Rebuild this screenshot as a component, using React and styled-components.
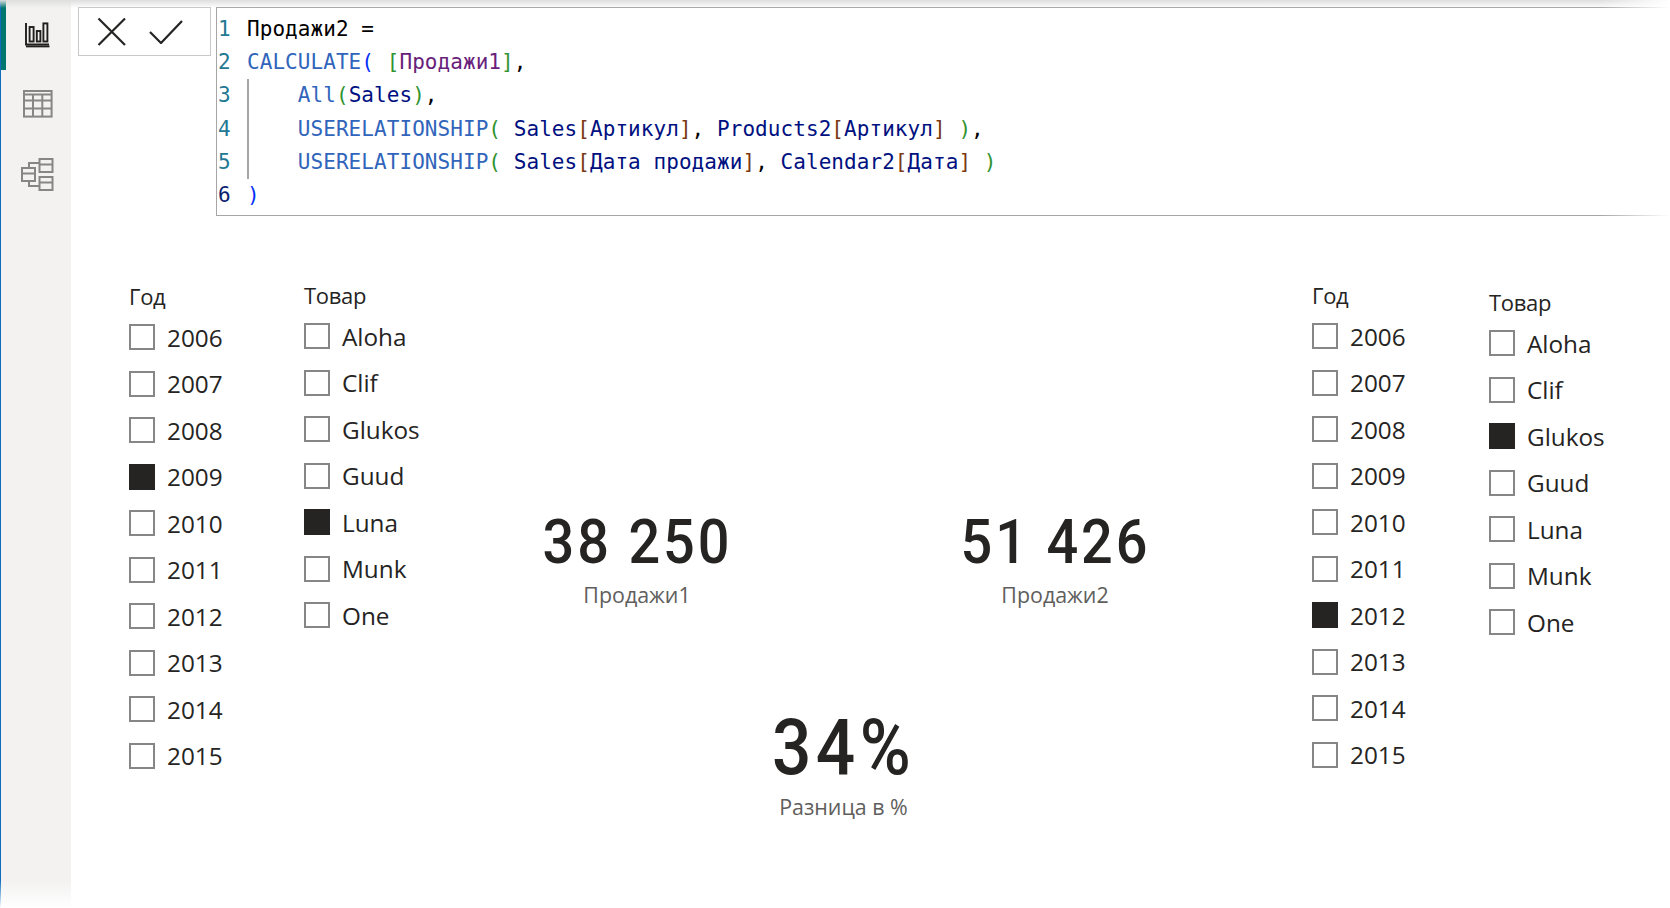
import React from 'react';
import styled, { createGlobalStyle } from 'styled-components';

const GlobalStyle = createGlobalStyle`
  html, body {
    margin: 0;
    padding: 0;
    background: #ffffff;
    overflow: hidden;
  }
`;

const Page = styled.div`
  width: 1670px;
  height: 908px;
  display: flex;
  position: relative;
  overflow: hidden;
  font-family: "Open Sans", "Noto Sans", sans-serif;
  color: #252423;
`;

// тень сверху и затухания по краям
const TopShade = styled.div`
  position: absolute;
  left: 0;
  right: 0;
  top: 0;
  height: 8px;
  background: linear-gradient(to bottom, #dedede, rgba(255, 255, 255, 0));
`;

const BottomFade = styled.div`
  position: absolute;
  left: 0;
  width: 71px;
  bottom: 0;
  height: 28px;
  background: linear-gradient(to bottom, rgba(255, 255, 255, 0), #ffffff);
`;

const RightFade = styled.div`
  position: absolute;
  right: 0;
  top: 0;
  width: 70px;
  height: 220px;
  background: linear-gradient(to right, rgba(255, 255, 255, 0), #ffffff);
`;

const Sidebar = styled.nav`
  width: 70px;
  height: 908px;
  flex: none;
  background: #f3f2f1;
  border-left: 1px solid #0f6cbd;
  display: flex;
  flex-direction: column;
`;

const SideItem = styled.div`
  height: 70px;
  box-sizing: border-box;
  display: flex;
  align-items: center;
  justify-content: center;
  border-left: 5px solid ${props => (props.$active ? '#00786f' : 'transparent')};
  padding-right: 1px;
  padding-bottom: ${props => props.$pb || 0}px;
`;

const Main = styled.main`
  flex: 1;
  min-width: 0;
  display: flex;
  flex-direction: column;
`;

const FormulaBar = styled.div`
  display: flex;
  align-items: flex-start;
  gap: 5px;
  padding: 7px 0 0 7px;
`;

const ActionBox = styled.div`
  width: 131px;
  height: 47px;
  flex: none;
  border: 1px solid #c8c8c8;
  display: flex;
  align-items: center;
`;

const Editor = styled.div`
  flex: 1;
  height: 209px;
  box-sizing: border-box;
  border-left: 1px solid #a6a6a6;
  border-top: 1px solid #a6a6a6;
  border-bottom: 1px solid #a6a6a6;
  padding-top: 5px;
  font-family: "DejaVu Sans Mono", "Liberation Mono", monospace;
  font-size: 21px;
  letter-spacing: 0.06px;
  position: relative;
`;

const Guide = styled.div`
  position: absolute;
  left: 30px;
  top: 71px;
  width: 2px;
  height: 100px;
  background: #a6a6a6;
`;

const CodeRow = styled.div`
  height: 33.2px;
  line-height: 33.2px;
  display: flex;
  white-space: pre;
`;

const LineNo = styled.span`
  width: 30px;
  padding-left: 1px;
  box-sizing: border-box;
  color: ${props => (props.$active ? '#0b216f' : '#237893')};
`;

const Tok = styled.span`
  color: ${props => props.$c};
`;

const Canvas = styled.div`
  flex: 1;
  display: flex;
  align-items: flex-start;
  padding-left: 58px;
`;

const Slicer = styled.div`
  width: ${props => props.$w}px;
  flex: none;
  margin-top: ${props => props.$top}px;
`;

const SlicerTitle = styled.div`
  font-size: 22px;
  line-height: 30px;
  height: 33px;
  letter-spacing: -0.3px;
`;

const SlicerRow = styled.div`
  height: 46.5px;
  display: flex;
  align-items: center;
  gap: 12px;
  font-size: 24.3px;
`;

const Box = styled.span`
  width: 26px;
  height: 26px;
  flex: none;
  box-sizing: border-box;
  border: 2px solid #868686;
  background: #ffffff;
  ${props => props.$on && 'background: #252423; border-color: #252423;'}
`;

const Center = styled.div`
  width: 841px;
  flex: none;
  margin-top: 288px;
`;

const KpiRow = styled.div`
  display: flex;
  justify-content: space-between;
  padding: 0 157px 0 66px;
`;

const Kpi = styled.div`
  width: 200px;
  display: flex;
  flex-direction: column;
  align-items: center;
`;

const KpiValue = styled.div`
  font-family: "Roboto", sans-serif;
  font-weight: 500;
  font-size: ${props => props.$size}px;
  line-height: ${props => props.$lh}px;
  letter-spacing: ${props => props.$ls}px;
  transform: scaleX(${props => props.$sx});
  white-space: nowrap;
`;

const KpiLabel = styled.div`
  font-size: 21.4px;
  line-height: 30px;
  color: #605e5c;
  white-space: nowrap;
  padding-top: ${props => props.$pt || 0}px;
`;

const BottomKpi = styled.div`
  display: flex;
  justify-content: center;
  margin-top: 94px;
  padding-right: 96px;
`;

const ActionSlot = styled.span`
  display: flex;
  margin-left: ${props => props.$left}px;
`;

const ReportIcon = () => (
  <svg width="26" height="26" viewBox="0 0 26 26" fill="none" stroke="#1f1e1d" strokeWidth="1.9">
    <path d="M1 1v21.5h23" />
    <path d="M1 24.4h23.5" />
    <rect x="4.6" y="5" width="4" height="14.5" />
    <rect x="11.8" y="9" width="3.6" height="10.5" />
    <rect x="18.4" y="1.4" width="4" height="18.1" />
  </svg>
);

const TableIcon = () => (
  <svg width="30" height="28" viewBox="0 0 30 28" fill="none" stroke="#868686" strokeWidth="2">
    <rect x="1" y="1" width="27.6" height="25.6" />
    <path d="M1 4.6h27.6M1 10.5h27.6M1 18.5h27.6M10 4.6v22M19.3 4.6v22" />
  </svg>
);

const ModelIcon = () => (
  <svg width="34" height="34" viewBox="0 0 34 34" fill="none" stroke="#868686" strokeWidth="2">
    <rect x="18.5" y="1" width="13" height="13" />
    <path d="M18.5 6.5h13" />
    <rect x="1" y="10" width="13" height="13" />
    <path d="M1 15.5h13" />
    <rect x="18.5" y="19" width="13" height="13" />
    <path d="M18.5 24.5h13" />
    <path d="M8 10V5h10.5M8 23v5h10.5" />
  </svg>
);

const CloseIcon = () => (
  <svg width="30" height="30" viewBox="0 0 30 30" fill="none" stroke="#252423" strokeWidth="2.2">
    <path d="M1.5 1.5l26.5 26.5M28 1.5L1.5 28" />
  </svg>
);

const CheckIcon = () => (
  <svg width="34" height="24" viewBox="0 0 34 24" fill="none" stroke="#252423" strokeWidth="2.2">
    <path d="M1 12l11 11L33 1" />
  </svg>
);

const FN = '#3165bb';
const MEASURE = '#68217a';
const TABLE = '#001080';
const P1 = '#0431fa';
const P2 = '#319331';
const P3 = '#7b3814';
const BLACK = '#000000';

const code = [
  [['Продажи2 =', BLACK]],
  [['CALCULATE', FN], ['(', P1], [' '], ['[', P2], ['Продажи1', MEASURE], [']', P2], [',', BLACK]],
  [['    '], ['All', FN], ['(', P2], ['Sales', TABLE], [')', P2], [',', BLACK]],
  [['    '], ['USERELATIONSHIP', FN], ['(', P2], [' '], ['Sales', TABLE], ['[', P3], ['Артикул', TABLE], [']', P3], [', ', BLACK], ['Products2', TABLE], ['[', P3], ['Артикул', TABLE], [']', P3], [' '], [')', P2], [',', BLACK]],
  [['    '], ['USERELATIONSHIP', FN], ['(', P2], [' '], ['Sales', TABLE], ['[', P3], ['Дата продажи', TABLE], [']', P3], [', ', BLACK], ['Calendar2', TABLE], ['[', P3], ['Дата', TABLE], [']', P3], [' '], [')', P2]],
  [[')', P1]],
];

const years = ['2006', '2007', '2008', '2009', '2010', '2011', '2012', '2013', '2014', '2015'];
const products = ['Aloha', 'Clif', 'Glukos', 'Guud', 'Luna', 'Munk', 'One'];

const SlicerList = ({ title, items, selected, width, top }) => (
  <Slicer $w={width} $top={top}>
    <SlicerTitle>{title}</SlicerTitle>
    {items.map(item => (
      <SlicerRow key={item}>
        <Box $on={item === selected} />
        <span>{item}</span>
      </SlicerRow>
    ))}
  </Slicer>
);

const App = () => (
  <Page>
    <GlobalStyle />
    <Sidebar>
      <SideItem $active><ReportIcon /></SideItem>
      <SideItem $pb={3}><TableIcon /></SideItem>
      <SideItem><ModelIcon /></SideItem>
    </Sidebar>
    <Main>
      <FormulaBar>
        <ActionBox>
          <ActionSlot $left={18}><CloseIcon /></ActionSlot>
          <ActionSlot $left={22}><CheckIcon /></ActionSlot>
        </ActionBox>
        <Editor>
          <Guide />
          {code.map((line, i) => (
            <CodeRow key={i}>
              <LineNo $active={i === 5}>{i + 1}</LineNo>
              {line.map((t, j) => <Tok key={j} $c={t[1]}>{t[0]}</Tok>)}
            </CodeRow>
          ))}
        </Editor>
      </FormulaBar>
      <Canvas>
        <SlicerList title="Год" items={years} selected="2009" width={175} top={65} />
        <SlicerList title="Товар" items={products} selected="Luna" width={167} top={64} />
        <Center>
          <KpiRow>
            <Kpi>
              <KpiValue $size={62} $lh={75} $ls={3.2} $sx={0.9}>38 250</KpiValue>
              <KpiLabel $pt={1}>Продажи1</KpiLabel>
            </Kpi>
            <Kpi>
              <KpiValue $size={62} $lh={75} $ls={3.2} $sx={0.9}>51 426</KpiValue>
              <KpiLabel $pt={1}>Продажи2</KpiLabel>
            </Kpi>
          </KpiRow>
          <BottomKpi>
            <Kpi>
              <KpiValue $size={77} $lh={88} $ls={5} $sx={0.9}>34%</KpiValue>
              <KpiLabel>Разница в %</KpiLabel>
            </Kpi>
          </BottomKpi>
        </Center>
        <SlicerList title="Год" items={years} selected="2012" width={177} top={64} />
        <SlicerList title="Товар" items={products} selected="Glukos" width={170} top={71} />
      </Canvas>
    </Main>
    <TopShade />
    <BottomFade />
    <RightFade />
  </Page>
);

export default App;
